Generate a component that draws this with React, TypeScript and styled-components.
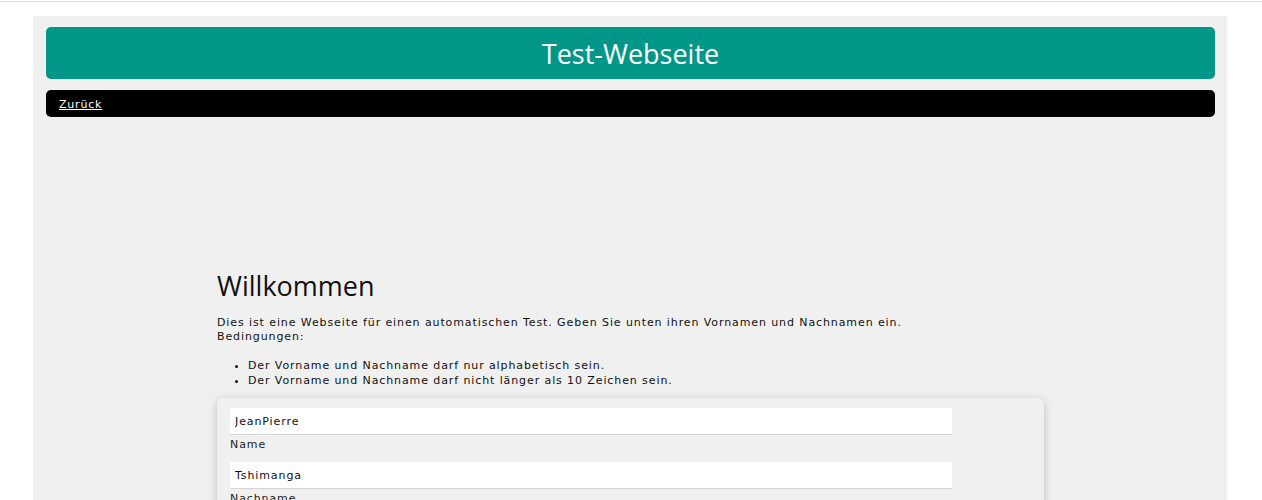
import React from "react";
import styled, { createGlobalStyle } from "styled-components";

const GlobalStyle = createGlobalStyle`
  html, body { margin: 0; padding: 0; background: #ffffff; }
  body { font-family: "DejaVu Sans", Verdana, sans-serif; color: #111; }
`;

const TopRule = styled.div`
  margin-top: 1px;
  height: 1px;
  background: #e2e2e2;
`;

const Page = styled.div`
  width: 1194px;
  margin: 14px 0 0 33px;
  background: #f0f0f0;
  padding: 11px 12px 0 13px;
  box-sizing: border-box;
  min-height: 600px;
`;

const Header = styled.header`
  height: 52px;
  border-radius: 5px;
  background: #009688;
  color: #fff;
  display: flex;
  align-items: center;
  justify-content: center;
  font-family: "Open Sans", "Noto Sans", sans-serif;
  font-size: 27px;
`;

const Nav = styled.nav`
  margin-top: 11px;
  height: 27px;
  border-radius: 5px;
  background: #000;
  display: flex;
  align-items: center;
  padding-left: 13px;
`;

const NavLink = styled.a`
  color: #fff;
  font-size: 11px;
  letter-spacing: 0.8px;
  text-decoration: underline;
  padding-top: 2px;
`;

const Main = styled.main`
  width: 827px;
  margin: 151px 0 0 171px;
`;

const Title = styled.h1`
  margin: 0;
  font-family: "Open Sans", "Noto Sans", sans-serif;
  font-weight: 400;
  font-size: 27px;
  line-height: 36px;
  color: #111;
`;

const Text = styled.p`
  margin: 12px 0 0;
  font-size: 11px;
  line-height: 14px;
  letter-spacing: 0.9px;
`;

const Rules = styled.ul`
  margin: 14px 0 0;
  padding-left: 31px;
  font-size: 11px;
  line-height: 15px;
  letter-spacing: 0.9px;
`;

const Card = styled.form`
  margin-top: 10px;
  background: #f0f0f0;
  border-radius: 6px;
  box-shadow: 0 2px 8px rgba(0, 0, 0, 0.22);
  padding: 10px 13px 20px;
  display: flex;
  flex-direction: column;
  gap: 9px;
`;

const Field = styled.label`
  display: flex;
  flex-direction: column;
  width: 722px;
`;

const Input = styled.input`
  height: 27px;
  border: none;
  border-bottom: 1px solid #d6d6d6;
  background: #fff;
  padding: 0 5px;
  font-family: "DejaVu Sans", Verdana, sans-serif;
  font-size: 11px;
  letter-spacing: 0.9px;
  color: #111;
  outline: none;
  box-sizing: border-box;
`;

const FieldLabel = styled.span`
  font-size: 11px;
  line-height: 17px;
  padding-top: 1px;
  letter-spacing: 0.9px;
  color: #222;
`;

export default function App() {
  return (
    <>
      <GlobalStyle />
      <TopRule />
      <Page>
        <Header>Test-Webseite</Header>
        <Nav>
          <NavLink href="#">Zurück</NavLink>
        </Nav>
        <Main>
          <Title>Willkommen</Title>
          <Text>
            Dies ist eine Webseite für einen automatischen Test. Geben Sie unten ihren Vornamen und Nachnamen ein.
            <br />
            Bedingungen:
          </Text>
          <Rules>
            <li>Der Vorname und Nachname darf nur alphabetisch sein.</li>
            <li>Der Vorname und Nachname darf nicht länger als 10 Zeichen sein.</li>
          </Rules>
          <Card>
            <Field>
              <Input defaultValue="JeanPierre" />
              <FieldLabel>Name</FieldLabel>
            </Field>
            <Field>
              <Input defaultValue="Tshimanga" />
              <FieldLabel>Nachname</FieldLabel>
            </Field>
          </Card>
        </Main>
      </Page>
    </>
  );
}
